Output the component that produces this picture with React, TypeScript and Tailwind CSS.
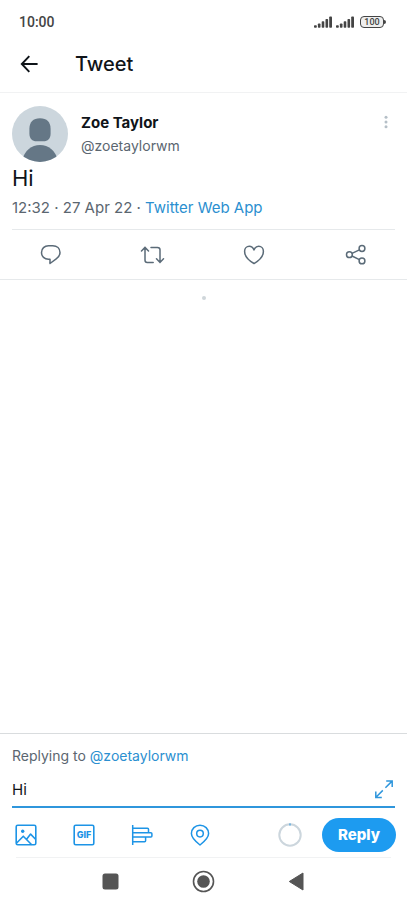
import { useState } from "react";

function SignalIcon() {
	return (
		<svg viewBox="0 0 18 12" className="h-3 w-[18px]" fill="currentColor" aria-hidden="true">
			<rect x="0" y="9.2" width="2.8" height="2.6" rx="0.8" />
			<rect x="3.9" y="7.4" width="2.6" height="4.4" rx="0.8" />
			<rect x="7.7" y="5.2" width="2.600" height="6.6" rx="0.8" />
			<rect x="11.5" y="3" width="2.6" height="8.800" rx="0.8" />
			<rect x="15.2" y="0.5" width="2.8" height="11.3" rx="0.8" />
		</svg>
	);
}

function StatusBar() {
	return (
		<div className="flex h-9 items-center justify-between pt-2 pr-[21px] pl-[19px] text-[#444444]">
			<span className="font-['Roboto',sans-serif] text-sm font-medium">10:00</span>
			<div className="flex items-center gap-1">
				<SignalIcon />
				<SignalIcon />
				<div className="ml-0.5 flex items-center">
					<span className="flex h-3 w-6 items-center justify-center rounded-[4px] border border-[#444444] bg-[#eeeeee] font-['Roboto',sans-serif] text-[9px] leading-none font-medium">
						100
					</span>
					<span className="h-1 w-0.5 rounded-r-sm bg-[#444444]" />
				</div>
			</div>
		</div>
	);
}

function Header() {
	return (
		<header className="flex h-[57px] items-center gap-9 border-b border-[#f1f2f3] pl-[19px] text-[#0f1419]">
			<button type="button" aria-label="Back">
				<svg
					viewBox="0 0 20 20"
					className="size-5"
					fill="none"
					stroke="currentColor"
					strokeWidth="1.9"
				>
					<path d="M18.6 10H3M10.3 2.2 2.8 10l7.5 7.8" />
				</svg>
			</button>
			<h1 className="text-xl font-medium">Tweet</h1>
		</header>
	);
}

function Avatar() {
	return (
		<svg viewBox="0 0 56 56" className="size-14 shrink-0" aria-hidden="true">
			<defs>
				<clipPath id="avatar">
					<circle cx="28" cy="28" r="28" />
				</clipPath>
			</defs>
			<g clipPath="url(#avatar)">
				<rect width="56" height="56" fill="#ccd6dd" />
				<path
					d="M28 12.2c6.9 0 10.6 4 10.6 10.7v4.6c0 5.1-2.7 7.8-7.3 7.8h-6.6c-4.6 0-7.3-2.700-7.3-7.800v-4.600c0-6.700 3.700-10.700 10.600-10.700z"
					fill="#657786"
				/>
				<path d="M10 54c2.800-9.400 9.400-15 18-15s15.200 5.600 18 15v4H10z" fill="#657786" />
			</g>
		</svg>
	);
}

function TweetActions() {
	const icon = "size-[22px]";

	return (
		<div className="grid h-[50px] grid-cols-4 place-items-center border-b border-[#e6e9eb] text-[#5b6b78]">
			<button type="button" aria-label="Reply to tweet">
				<svg viewBox="0 0 22 22" className={icon} fill="none" stroke="currentColor" strokeWidth="1.5" strokeLinejoin="round">
					<path d="M8.500 1.700h4.200c4.300 0 7.300 2.800 7.300 6.800 0 2.900-1.400 4.700-3.800 6.400L10 19.500v-4.300H8.500c-4 0-7-2.700-7-6.700s3-6.800 7-6.800z" />
				</svg>
			</button>
			<button type="button" aria-label="Retweet">
				<svg viewBox="0 0 26 22" className="h-[22px] w-[26px]" fill="none" stroke="currentColor" strokeWidth="1.5" strokeLinecap="round">
					<path d="M1.500 7 5 3.400 8.500 7M5 3.800v12.400c0 1.400.8 2.200 2.200 2.200h6M11 3.400h6.500c1.700 0 2.500.8 2.500 2.300V18M16.500 14.800l3.500 3.600 3.500-3.600" />
				</svg>
			</button>
			<button type="button" aria-label="Like">
				<svg viewBox="0 0 22 22" className={icon} fill="none" stroke="currentColor" strokeWidth="1.5" strokeLinejoin="round">
					<path d="M11 6C10 3.700 8.300 2.300 6.300 2.300c-2.700 0-4.700 2.200-4.700 5 0 5.300 4.600 9.500 9.400 12.200 4.800-2.700 9.400-6.900 9.400-12.200 0-2.800-2-5-4.700-5-2 0-3.700 1.400-4.700 3.700z" />
				</svg>
			</button>
			<button type="button" aria-label="Share">
				<svg viewBox="0 0 22 22" className={icon} fill="none" stroke="currentColor" strokeWidth="1.5">
					<circle cx="4.400" cy="10.700" r="2.900" />
					<circle cx="17" cy="4.500" r="2.900" />
					<circle cx="17" cy="16.900" r="2.900" />
					<path d="m7 9.400 7.400-3.600M7 12l7.400 3.600" />
				</svg>
			</button>
		</div>
	);
}

function Tweet() {
	return (
		<article>
			<div className="px-3 pt-[13px]">
				<div className="flex items-center gap-[13px]">
					<Avatar />
					<div className="flex-1 leading-[23px]">
						<p className="text-[15px] font-bold text-[#0f1419]">Zoe Taylor</p>
						<p className="text-sm leading-[23px] text-[#5b6670]">@zoetaylorwm</p>
					</div>
					<button type="button" aria-label="More" className="mb-6 w-[18px]">
						<svg viewBox="0 0 18 16" className="h-4 w-[18px]" fill="#b5bfc7">
							<circle cx="9" cy="3.200" r="1.500" />
							<circle cx="9" cy="8" r="1.500" />
							<circle cx="9" cy="12.800" r="1.500" />
						</svg>
					</button>
				</div>
				<p className="text-[22px] leading-8 text-[#0f1419]">Hi</p>
				<p className="mt-0.5 border-b border-[#e6e9eb] pb-[9px] text-[15px] leading-6 text-[#5b6670]">
					12:32 · 27 Apr 22 ·{" "}
					<a href="#source" className="text-[#2b8fd0]">
						Twitter Web App
					</a>
				</p>
			</div>
			<TweetActions />
		</article>
	);
}

function ComposerTools() {
	const icon = "size-[22px]";

	return (
		<div className="flex gap-9 text-[#1d94e6]">
			<button type="button" aria-label="Add photo">
				<svg viewBox="0 0 22 22" className={icon} fill="none" stroke="currentColor" strokeWidth="1.600" strokeLinejoin="round">
					<rect x="1.200" y="1.200" width="19.600" height="19.600" rx="1.500" />
					<circle cx="7.700" cy="7.300" r="1.700" fill="currentColor" stroke="none" />
					<path d="m1.400 19.200 6.900-7 8.400 8.500M11.600 15.300l4-5.200 5.200 5.400" />
				</svg>
			</button>
			<button type="button" aria-label="Add GIF">
				<svg viewBox="0 0 22 22" className={icon} fill="none" stroke="currentColor" strokeWidth="1.600">
					<rect x="1.200" y="1.200" width="19.600" height="19.600" rx="1.500" />
					<text
						x="11"
						y="14.200"
						textAnchor="middle"
						fill="currentColor"
						stroke="none"
						className="font-['Inter',sans-serif] text-[9px] font-extrabold"
					>
						GIF
					</text>
				</svg>
			</button>
			<button type="button" aria-label="Add poll">
				<svg viewBox="0 0 22 22" className={icon} fill="none" stroke="currentColor" strokeWidth="1.500" strokeLinejoin="round">
					<path d="M1.700 1v20M1.700 4.200h14.800a1 1 0 0 1 1 1v3.400M1.700 8.700h18.200a1 1 0 0 1 1 1v2.300a1 1 0 0 1-1 1H1.700M14.600 13v3.700a1 1 0 0 1-1 1H1.700" />
				</svg>
			</button>
			<button type="button" aria-label="Add location">
				<svg viewBox="0 0 22 22" className={icon} fill="none" stroke="currentColor" strokeWidth="1.500" strokeLinejoin="round">
					<path d="M11 1.200c4.900 0 8.600 3.700 8.600 8.400 0 4.500-3.600 7.600-8.600 11.400-5-3.800-8.600-6.900-8.600-11.400 0-4.700 3.700-8.400 8.600-8.400z" />
					<circle cx="11" cy="9.600" r="3.300" />
				</svg>
			</button>
		</div>
	);
}

function Composer() {
	const [text, setText] = useState("Hi");

	return (
		<form className="border-t border-[#d9dcde]" onSubmit={(e) => e.preventDefault()}>
			<div className="px-3 pt-3">
				<p className="text-sm leading-5 text-[#5b6670]">
					Replying to{" "}
					<a href="#zoetaylorwm" className="text-[#2b8fd0]">
						@zoetaylorwm
					</a>
				</p>
				<div className="mt-2 flex h-[34px] items-center border-b-2 border-[#2f96dc]">
					<input
						type="text"
						aria-label="Tweet your reply"
						value={text}
						onChange={(e) => setText(e.target.value)}
						className="min-w-0 flex-1 text-[15px] text-[#0f1419] outline-none"
					/>
					<button type="button" aria-label="Expand" className="text-[#2f96dc]">
						<svg viewBox="0 0 22 22" className="size-[22px]" fill="none" stroke="currentColor" strokeWidth="1.500">
							<path d="M12.400 8.800 18.800 2.400M13.200 2h6v6M9.800 11.400 3.200 18M2.800 12.400v6h6" />
						</svg>
					</button>
				</div>
			</div>
			<div className="flex items-center justify-between pt-2.5 pr-[11px] pb-[5px] pl-[15px]">
				<ComposerTools />
				<div className="flex items-center gap-5">
					<svg viewBox="0 0 24 24" className="size-6" fill="none" strokeWidth="2" aria-hidden="true">
						<circle cx="12" cy="12" r="10.700" stroke="#ccd6dd" />
						<path d="M12 .3v2.400" stroke="#2f96dc" strokeWidth="1" />
					</svg>
					<button
						type="submit"
						className="h-[34px] rounded-full bg-[#1d9bf0] px-4 text-[15px] font-extrabold text-white"
					>
						Reply
					</button>
				</div>
			</div>
		</form>
	);
}

function NavigationBar() {
	return (
		<nav className="flex h-12 items-center justify-center gap-[69px] text-[#555555]">
			<button type="button" aria-label="Recent apps">
				<svg viewBox="0 0 24 24" className="size-6" fill="currentColor">
					<rect x="3.500" y="3.500" width="16" height="16" rx="2.500" />
				</svg>
			</button>
			<button type="button" aria-label="Home">
				<svg viewBox="0 0 24 24" className="size-6" fill="none" stroke="currentColor" strokeWidth="1.600">
					<circle cx="11.500" cy="11.500" r="10" />
					<circle cx="11.500" cy="11.500" r="6.300" fill="currentColor" stroke="none" />
				</svg>
			</button>
			<button type="button" aria-label="Go back">
				<svg viewBox="0 0 24 24" className="size-6" fill="currentColor" stroke="currentColor" strokeLinejoin="round">
					<path d="M4.300 11.500 18 3v17z" />
				</svg>
			</button>
		</nav>
	);
}

export default function App() {
	return (
		<div className="flex min-h-screen flex-col bg-white font-['Inter',sans-serif]">
			<StatusBar />
			<Header />
			<main className="flex-1">
				<Tweet />
				<div className="mx-auto mt-4 size-1 rounded-full bg-[#cfd6da]" />
			</main>
			<Composer />
			<div className="mx-4 border-t border-[#f1f2f3]" />
			<NavigationBar />
		</div>
	);
}
